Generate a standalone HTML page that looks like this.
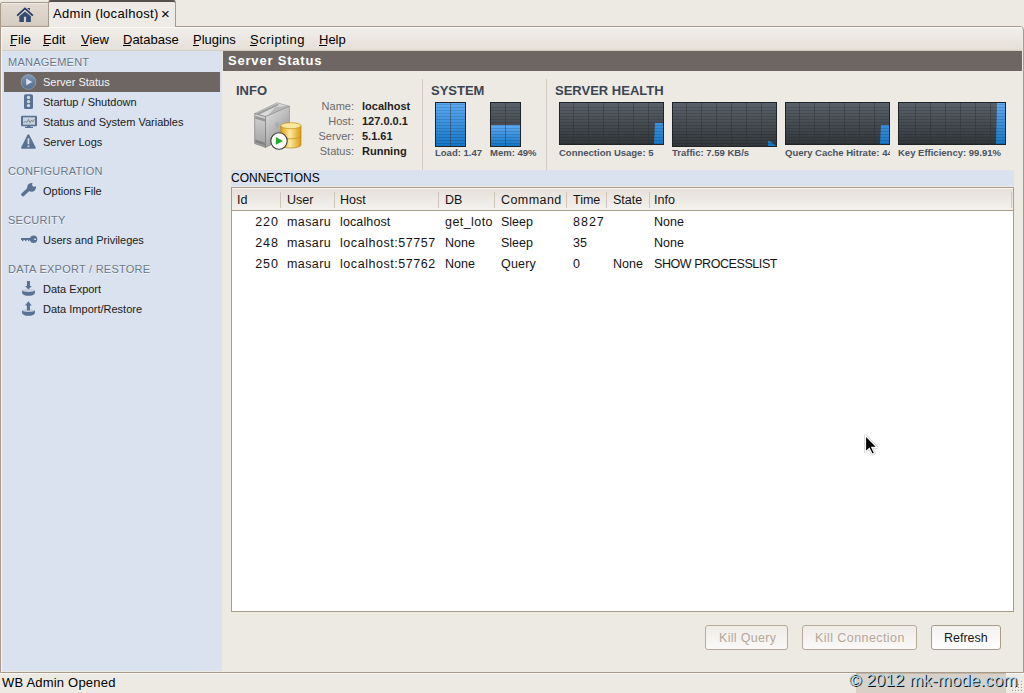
<!DOCTYPE html>
<html><head><meta charset="utf-8">
<style>
*{margin:0;padding:0;box-sizing:border-box}
html,body{width:1024px;height:693px;overflow:hidden}
body{background:#edeae4;font-family:"Liberation Sans",sans-serif;position:relative;color:#000}
.a{position:absolute;white-space:nowrap}
.t{position:absolute;white-space:nowrap;line-height:1}
.hd{font-size:11px;color:#6a7788;letter-spacing:0.25px;text-shadow:0 1px 0 #f4f7fb}
.it{font-size:11px;color:#1a1a1a}
.sh{font-size:13px;font-weight:bold;color:#3b4552}
.lb{font-size:11px;color:#6b6b6b}
.vl{font-size:11px;font-weight:bold;color:#1e1e1e}
.gl{font-size:9.5px;font-weight:bold;color:#4a5360}
.tc{font-size:12.5px;color:#141414}
.bt{font-size:12.5px}
</style></head><body>

<!-- frame -->
<div class="a" style="left:0;top:26px;width:1024px;height:647px;border:1px solid #a89a88;border-radius:0 4px 0 0"></div>
<div class="a" style="left:1px;top:27px;width:1px;height:645px;background:#f6f4f0"></div>
<div class="a" style="left:0;top:673px;width:1024px;height:1px;background:#f8f7f4"></div>

<!-- tab bar -->
<div class="a" style="left:0;top:2px;width:49px;height:25px;background:linear-gradient(#e2dbd2,#d5ccc1);border:1px solid #a89a88;border-radius:2px 2px 0 0;box-shadow:inset 0 1px 0 #efebe6"></div>
<div class="a" style="left:48px;top:0;width:128px;height:27px;background:#eeebe6;border:1px solid #a89a88;border-top:2px solid #55504c;border-bottom:none;border-radius:3px 3px 0 0"></div>
<div class="t" style="left:53px;top:7px;font-size:13px;letter-spacing:0.3px">Admin (localhost)</div>
<div class="t" style="left:161px;top:6px;font-size:15px">×</div>

<!-- menubar -->
<div class="a" style="left:2px;top:27px;width:1020px;height:24px;background:linear-gradient(#f1eeea,#e5dfd8);border-top:1px solid #faf9f6;border-bottom:1px solid #d6cdc2"></div>
<div class="t" style="left:10px;top:33px;font-size:13px">File</div>
<div class="t" style="left:43px;top:33px;font-size:13px">Edit</div>
<div class="t" style="left:81px;top:33px;font-size:13px">View</div>
<div class="t" style="left:123px;top:33px;font-size:13px">Database</div>
<div class="t" style="left:193px;top:33px;font-size:13px">Plugins</div>
<div class="t" style="left:250px;top:33px;font-size:13px;letter-spacing:0.5px">Scripting</div>
<div class="t" style="left:319px;top:33px;font-size:13px">Help</div>

<div class="a" style="left:10px;top:45px;width:6px;height:1px;background:#000"></div>
<div class="a" style="left:43px;top:45px;width:6px;height:1px;background:#000"></div>
<div class="a" style="left:81px;top:45px;width:7px;height:1px;background:#000"></div>
<div class="a" style="left:123px;top:45px;width:8px;height:1px;background:#000"></div>
<div class="a" style="left:193px;top:45px;width:6px;height:1px;background:#000"></div>
<div class="a" style="left:250px;top:45px;width:7px;height:1px;background:#000"></div>
<div class="a" style="left:319px;top:45px;width:8px;height:1px;background:#000"></div>
<!-- sidebar -->
<div class="a" style="left:2px;top:51px;width:220px;height:620px;background:#d9e2ee"></div>
<div class="a" style="left:4px;top:72px;width:216px;height:20px;background:#6e6663"></div>


<!-- sidebar items -->
<div class="t hd" style="left:8px;top:57px">MANAGEMENT</div>
<div class="t it" style="left:43px;top:77px;color:#f4f4f4">Server Status</div>
<div class="t it" style="left:43px;top:97px">Startup / Shutdown</div>
<div class="t it" style="left:43px;top:117px">Status and System Variables</div>
<div class="t it" style="left:43px;top:137px">Server Logs</div>
<div class="t hd" style="left:8px;top:166px">CONFIGURATION</div>
<div class="t it" style="left:43px;top:186px">Options File</div>
<div class="t hd" style="left:8px;top:215px">SECURITY</div>
<div class="t it" style="left:43px;top:235px">Users and Privileges</div>
<div class="t hd" style="left:8px;top:264px">DATA EXPORT / RESTORE</div>
<div class="t it" style="left:43px;top:284px">Data Export</div>
<div class="t it" style="left:43px;top:304px">Data Import/Restore</div>

<!-- header -->
<div class="a" style="left:223px;top:51px;width:799px;height:20px;background:#6e6663"></div>
<div class="t" style="left:228px;top:54px;font-size:13px;font-weight:bold;color:#fff;letter-spacing:0.8px">Server Status</div>


<!-- icons -->
<svg class="a" style="left:0;top:0" width="1024" height="330">
<defs>
<linearGradient id="icb" x1="0" y1="0" x2="0" y2="1"><stop offset="0" stop-color="#7e97b6"/><stop offset="1" stop-color="#536c8c"/></linearGradient>
<linearGradient id="towS" x1="0" y1="0" x2="0.6" y2="1"><stop offset="0" stop-color="#e4e4e4"/><stop offset="0.5" stop-color="#bdbdbd"/><stop offset="1" stop-color="#8e8e8e"/></linearGradient>
<linearGradient id="towF" x1="0" y1="0" x2="0" y2="1"><stop offset="0" stop-color="#d4d4d4"/><stop offset="1" stop-color="#a0a0a0"/></linearGradient>
<linearGradient id="gold" x1="0" y1="0" x2="1" y2="0"><stop offset="0" stop-color="#e0a010"/><stop offset="0.45" stop-color="#fde9a0"/><stop offset="1" stop-color="#d89a10"/></linearGradient>
</defs>
<!-- home -->
<g fill="#253b60">
<polyline points="17.2,15.6 25,8.4 32.8,15.6" fill="none" stroke="#253b60" stroke-width="1.8" stroke-linecap="butt"/>
<polygon points="27.2,8 29.8,8 29.8,10.4"/>
<polygon points="19.3,16.3 25,11.4 30.9,16.3 30.9,21.9 26.1,21.9 26.1,16.8 23.9,16.8 23.9,21.9 19.3,21.9" fill="#334b72"/>
</g>
<!-- server status circle -->
<circle cx="28.5" cy="82" r="7.4" fill="url(#icb)" stroke="#d6d2cf" stroke-width="0.6" stroke-opacity="0.6"/>
<polygon points="26.2,78.6 26.2,85.2 32.2,81.9" fill="#dbe2ec"/>
<!-- startup -->
<rect x="24" y="94.2" width="9" height="14.8" rx="1.6" fill="#5a7292"/>
<circle cx="28.5" cy="97.5" r="1.7" fill="#cfd8e2"/><circle cx="28.5" cy="101.6" r="1.7" fill="#cfd8e2"/><circle cx="28.5" cy="105.6" r="1.7" fill="#cfd8e2"/>
<!-- monitor -->
<rect x="21" y="115.8" width="16" height="10.4" rx="1" fill="#5a7292"/>
<rect x="23" y="117.3" width="12" height="7.4" fill="#c9d1da"/>
<polyline points="23.5,122.5 25.5,121.5 27,122.6 28.5,119.5 30,122.8 31.5,120 33,121.8 34.5,119" fill="none" stroke="#707b88" stroke-width="0.8"/>
<rect x="27.2" y="126" width="3" height="1" fill="#5a7292"/>
<rect x="25" y="126.8" width="8" height="1.2" fill="#5a7292"/>
<!-- warning -->
<path d="M28.4,134.3 Q29,134.3 29.5,135.2 L35.6,147.2 Q36,148.7 34.6,148.7 L22.2,148.7 Q20.8,148.7 21.2,147.2 L27.3,135.2 Q27.8,134.3 28.4,134.3 Z" fill="#5a7292"/>
<rect x="27.6" y="138.2" width="1.7" height="6" fill="#d4dbe4"/>
<rect x="27.6" y="145.5" width="1.7" height="1.6" fill="#d4dbe4"/>
<!-- wrench -->
<line x1="23" y1="194.5" x2="28.8" y2="189" stroke="#5a7292" stroke-width="3.6" stroke-linecap="round"/>
<circle cx="31.6" cy="187.3" r="4.4" fill="#5a7292"/>
<circle cx="34.2" cy="184.7" r="2.1" fill="#d9e2ee"/>
<polygon points="33.5,182 37.5,182 37.5,186 36.2,186" fill="#d9e2ee"/>
<!-- key -->
<circle cx="33.6" cy="239.3" r="3.7" fill="#5a7292"/>
<rect x="21" y="238" width="10" height="2" fill="#5a7292"/>
<rect x="22" y="239.5" width="1.4" height="1.6" fill="#5a7292"/><rect x="25" y="239.5" width="1.4" height="1.6" fill="#5a7292"/><rect x="28" y="239.5" width="1.4" height="1.6" fill="#5a7292"/>
<rect x="34" y="238.7" width="2" height="1.2" fill="#dfe5ee"/>
<!-- export -->
<ellipse cx="28.5" cy="292.8" rx="6.4" ry="3" fill="#5a7292"/>
<rect x="22.1" y="290.3" width="12.8" height="2.5" fill="#5a7292"/>
<ellipse cx="28.5" cy="290.3" rx="6.4" ry="1.6" fill="#c8d1dc"/>
<rect x="26.9" y="281" width="3.1" height="5.5" fill="#5a7292"/>
<polygon points="25,286 31.8,286 28.4,289.4" fill="#5a7292"/>
<!-- import -->
<ellipse cx="28.5" cy="312.8" rx="6.4" ry="3" fill="#5a7292"/>
<rect x="22.1" y="310.3" width="12.8" height="2.5" fill="#5a7292"/>
<ellipse cx="28.5" cy="310.3" rx="6.4" ry="1.6" fill="#c8d1dc"/>
<rect x="26.9" y="305" width="3.1" height="5.5" fill="#5a7292"/>
<polygon points="25,305.4 31.8,305.4 28.4,301.2" fill="#5a7292"/>
<!-- server tower -->
<polygon points="254.7,113.6 277.2,102.8 289.4,106.3 265.5,116.6" fill="#dcdcdc" stroke="#8a8a8a" stroke-width="0.6"/>
<polygon points="256.5,113.6 276.8,104 279.5,104.8 259.2,114.4" fill="#9c9c9c"/>
<polygon points="275.5,107 287.5,105.8 288.2,106.6 268,115.3" fill="#a8a8a8" opacity="0.7"/>
<polygon points="265.5,116.6 289.4,106.3 289.4,135.7 265.5,147.4" fill="url(#towS)" stroke="#808080" stroke-width="0.6"/>
<polygon points="254.7,113.6 265.5,116.6 265.5,147.4 254.7,143.5" fill="url(#towF)" stroke="#707070" stroke-width="0.6"/>
<polygon points="255.3,116 264.9,118.8 264.9,121.5 255.3,118.7" fill="#6a6a6a" opacity="0.55"/>
<polygon points="255.3,139.5 264.9,142.5 264.9,145.5 255.3,142.5" fill="#6a6a6a" opacity="0.6"/>
<ellipse cx="277" cy="125" rx="2.2" ry="2.8" fill="#a0a0a0" opacity="0.5"/>
<!-- database -->
<path d="M280.8,125.7 L280.8,145 A10.1,3 0 0 0 301,145 L301,125.7 Z" fill="url(#gold)" stroke="#b88812" stroke-width="0.7"/>
<path d="M280.8,135.8 A10.1,3 0 0 0 301,135.8" fill="none" stroke="#c89418" stroke-width="0.8"/>
<ellipse cx="290.9" cy="125.7" rx="10.1" ry="3" fill="#fbe7a0" stroke="#c0901a" stroke-width="0.7"/>
<!-- play -->
<circle cx="279" cy="141" r="8.2" fill="#fdfdfd" stroke="#3a3a3a" stroke-width="1.1"/>
<polygon points="275.9,137 275.9,144.8 282.9,140.9" fill="#22aa22"/>
</svg>
<!-- info section -->
<div class="t sh" style="left:236px;top:84px">INFO</div>
<div class="t sh" style="left:431px;top:84px">SYSTEM</div>
<div class="t sh" style="left:555px;top:84px">SERVER HEALTH</div>
<div class="a" style="left:422px;top:79px;width:1px;height:91px;background:#d2ccc3"></div>
<div class="a" style="left:546px;top:79px;width:1px;height:91px;background:#d2ccc3"></div>
<div class="t lb" style="right:670px;top:101px">Name:</div>
<div class="t lb" style="right:670px;top:116px">Host:</div>
<div class="t lb" style="right:670px;top:131px">Server:</div>
<div class="t lb" style="right:670px;top:146px">Status:</div>
<div class="t vl" style="left:362px;top:101px">localhost</div>
<div class="t vl" style="left:362px;top:116px">127.0.0.1</div>
<div class="t vl" style="left:362px;top:131px">5.1.61</div>
<div class="t vl" style="left:362px;top:146px">Running</div>
<div class="t gl" style="left:435px;top:148px">Load: 1.47</div>
<div class="t gl" style="left:490px;top:148px">Mem: 49%</div>
<div class="t gl" style="left:559px;top:148px">Connection Usage: 5</div>
<div class="t gl" style="left:672px;top:148px">Traffic: 7.59 KB/s</div>
<div class="a" style="left:785px;top:140px;width:105px;height:20px;overflow:hidden"><div class="t gl" style="left:0;top:8px">Query Cache Hitrate: 44%</div></div>
<div class="t gl" style="left:898px;top:148px">Key Efficiency: 99.91%</div>

<!-- graphs -->
<svg width="0" height="0" style="position:absolute"><defs>
<linearGradient id="gbg" x1="0" y1="0" x2="0" y2="1"><stop offset="0" stop-color="#59616a"/><stop offset="1" stop-color="#33373b"/></linearGradient>
<linearGradient id="gblue" x1="0" y1="0" x2="0" y2="1"><stop offset="0" stop-color="#5eaaf4"/><stop offset="1" stop-color="#1476c6"/></linearGradient>
<linearGradient id="gblueU" gradientUnits="userSpaceOnUse" x1="0" y1="1" x2="0" y2="43"><stop offset="0" stop-color="#5eaaf4"/><stop offset="1" stop-color="#1476c6"/></linearGradient>
<pattern id="stripes" x="0" y="0" width="8" height="3" patternUnits="userSpaceOnUse"><rect x="0" y="2" width="8" height="1" fill="#000" opacity="0.13"/></pattern>
</defs></svg><svg class="a" style="left:435px;top:102px" width="31" height="45" shape-rendering="crispEdges"><rect x="0" y="0" width="31" height="45" fill="#202427"/><rect x="1" y="1" width="29" height="43" fill="url(#gbg)"/><rect x="1" y="2" width="29" height="1" fill="#6a737a" opacity="0.6"/><polygon points="1,1 30,1 30,44 1,44" fill="url(#gblue)" shape-rendering="auto"/><rect x="1" y="1" width="29" height="43" fill="url(#stripes)"/><rect x="15" y="1" width="1" height="43" fill="#2c3034" opacity="0.45"/></svg><svg class="a" style="left:490px;top:102px" width="31" height="45" shape-rendering="crispEdges"><rect x="0" y="0" width="31" height="45" fill="#202427"/><rect x="1" y="1" width="29" height="43" fill="url(#gbg)"/><rect x="1" y="2" width="29" height="1" fill="#6a737a" opacity="0.6"/><polygon points="1,23 30,23 30,44 1,44" fill="url(#gblue)" shape-rendering="auto"/><rect x="1" y="1" width="29" height="43" fill="url(#stripes)"/><rect x="15" y="1" width="1" height="43" fill="#2c3034" opacity="0.45"/></svg><svg class="a" style="left:559px;top:102px" width="105" height="43" shape-rendering="crispEdges"><rect x="0" y="0" width="105" height="43" fill="#202427"/><rect x="1" y="1" width="103" height="41" fill="url(#gbg)"/><rect x="1" y="2" width="103" height="1" fill="#6a737a" opacity="0.6"/><polygon points="96,21 104,21 104,42 95,42" fill="url(#gblueU)" shape-rendering="auto"/><rect x="1" y="1" width="103" height="41" fill="url(#stripes)"/><rect x="89" y="1" width="1" height="41" fill="#2c3034" opacity="0.45"/><rect x="74" y="1" width="1" height="41" fill="#2c3034" opacity="0.45"/><rect x="59" y="1" width="1" height="41" fill="#2c3034" opacity="0.45"/><rect x="44" y="1" width="1" height="41" fill="#2c3034" opacity="0.45"/><rect x="29" y="1" width="1" height="41" fill="#2c3034" opacity="0.45"/><rect x="14" y="1" width="1" height="41" fill="#2c3034" opacity="0.45"/></svg><svg class="a" style="left:672px;top:102px" width="105" height="45" shape-rendering="crispEdges"><rect x="0" y="0" width="105" height="45" fill="#202427"/><rect x="1" y="1" width="103" height="43" fill="url(#gbg)"/><rect x="1" y="2" width="103" height="1" fill="#6a737a" opacity="0.6"/><polygon points="96,39 98,39 104,44 96,44" fill="url(#gblueU)" shape-rendering="auto"/><rect x="1" y="1" width="103" height="43" fill="url(#stripes)"/><rect x="89" y="1" width="1" height="43" fill="#2c3034" opacity="0.45"/><rect x="74" y="1" width="1" height="43" fill="#2c3034" opacity="0.45"/><rect x="59" y="1" width="1" height="43" fill="#2c3034" opacity="0.45"/><rect x="44" y="1" width="1" height="43" fill="#2c3034" opacity="0.45"/><rect x="29" y="1" width="1" height="43" fill="#2c3034" opacity="0.45"/><rect x="14" y="1" width="1" height="43" fill="#2c3034" opacity="0.45"/></svg><svg class="a" style="left:785px;top:102px" width="105" height="43" shape-rendering="crispEdges"><rect x="0" y="0" width="105" height="43" fill="#202427"/><rect x="1" y="1" width="103" height="41" fill="url(#gbg)"/><rect x="1" y="2" width="103" height="1" fill="#6a737a" opacity="0.6"/><polygon points="96,23 104,23 104,42 95,42" fill="url(#gblueU)" shape-rendering="auto"/><rect x="1" y="1" width="103" height="41" fill="url(#stripes)"/><rect x="89" y="1" width="1" height="41" fill="#2c3034" opacity="0.45"/><rect x="74" y="1" width="1" height="41" fill="#2c3034" opacity="0.45"/><rect x="59" y="1" width="1" height="41" fill="#2c3034" opacity="0.45"/><rect x="44" y="1" width="1" height="41" fill="#2c3034" opacity="0.45"/><rect x="29" y="1" width="1" height="41" fill="#2c3034" opacity="0.45"/><rect x="14" y="1" width="1" height="41" fill="#2c3034" opacity="0.45"/></svg><svg class="a" style="left:898px;top:102px" width="108" height="43" shape-rendering="crispEdges"><rect x="0" y="0" width="108" height="43" fill="#202427"/><rect x="1" y="1" width="106" height="41" fill="url(#gbg)"/><rect x="1" y="2" width="106" height="1" fill="#6a737a" opacity="0.6"/><polygon points="99,1 107,1 107,42 98,42" fill="url(#gblueU)" shape-rendering="auto"/><rect x="1" y="1" width="106" height="41" fill="url(#stripes)"/><rect x="92" y="1" width="1" height="41" fill="#2c3034" opacity="0.45"/><rect x="77" y="1" width="1" height="41" fill="#2c3034" opacity="0.45"/><rect x="62" y="1" width="1" height="41" fill="#2c3034" opacity="0.45"/><rect x="47" y="1" width="1" height="41" fill="#2c3034" opacity="0.45"/><rect x="32" y="1" width="1" height="41" fill="#2c3034" opacity="0.45"/><rect x="17" y="1" width="1" height="41" fill="#2c3034" opacity="0.45"/></svg>
<!-- connections -->
<div class="a" style="left:231px;top:170px;width:783px;height:16px;background:#d9e2ee"></div>
<div class="t" style="left:231px;top:172px;font-size:12px">CONNECTIONS</div>
<div class="a" style="left:231px;top:187px;width:783px;height:425px;background:#fff;border:1px solid #a89c8a"></div>


<!-- table header -->
<div class="a" style="left:232px;top:188px;width:781px;height:23px;background:linear-gradient(#e6e0d9,#f4f2ee);border-top:1px solid #faf8f5;border-bottom:1px solid #a89c8a"></div>
<div class="a" style="left:280px;top:192px;width:1px;height:16px;background:#cfc7bc"></div>
<div class="a" style="left:334px;top:192px;width:1px;height:16px;background:#cfc7bc"></div>
<div class="a" style="left:438px;top:192px;width:1px;height:16px;background:#cfc7bc"></div>
<div class="a" style="left:494px;top:192px;width:1px;height:16px;background:#cfc7bc"></div>
<div class="a" style="left:566px;top:192px;width:1px;height:16px;background:#cfc7bc"></div>
<div class="a" style="left:606px;top:192px;width:1px;height:16px;background:#cfc7bc"></div>
<div class="a" style="left:649px;top:192px;width:1px;height:16px;background:#cfc7bc"></div>
<div class="a" style="left:1011px;top:192px;width:1px;height:16px;background:#cfc7bc"></div>
<div class="t tc" style="left:237px;top:194px">Id</div>
<div class="t tc" style="left:287px;top:194px">User</div>
<div class="t tc" style="left:340px;top:194px">Host</div>
<div class="t tc" style="left:445px;top:194px">DB</div>
<div class="t tc" style="left:501px;top:194px;letter-spacing:0.43px">Command</div>
<div class="t tc" style="left:573px;top:194px">Time</div>
<div class="t tc" style="left:613px;top:194px">State</div>
<div class="t tc" style="left:654px;top:194px">Info</div>
<div class="t tc" style="right:745px;top:216px;letter-spacing:1px">220</div>
<div class="t tc" style="left:287px;top:216px;letter-spacing:0.4px">masaru</div>
<div class="t tc" style="left:340px;top:216px;letter-spacing:0.12px">localhost</div>
<div class="t tc" style="left:445px;top:216px;letter-spacing:0.43px">get_loto</div>
<div class="t tc" style="left:501px;top:216px">Sleep</div>
<div class="t tc" style="left:573px;top:216px;letter-spacing:1px">8827</div>
<div class="t tc" style="left:654px;top:216px">None</div>
<div class="t tc" style="right:745px;top:237px;letter-spacing:1px">248</div>
<div class="t tc" style="left:287px;top:237px;letter-spacing:0.4px">masaru</div>
<div class="t tc" style="left:340px;top:237px;letter-spacing:0.55px">localhost:57757</div>
<div class="t tc" style="left:445px;top:237px">None</div>
<div class="t tc" style="left:501px;top:237px">Sleep</div>
<div class="t tc" style="left:573px;top:237px">35</div>
<div class="t tc" style="left:654px;top:237px">None</div>
<div class="t tc" style="right:745px;top:258px;letter-spacing:1px">250</div>
<div class="t tc" style="left:287px;top:258px;letter-spacing:0.4px">masaru</div>
<div class="t tc" style="left:340px;top:258px;letter-spacing:0.55px">localhost:57762</div>
<div class="t tc" style="left:445px;top:258px">None</div>
<div class="t tc" style="left:501px;top:258px;letter-spacing:0.2px">Query</div>
<div class="t tc" style="left:573px;top:258px">0</div>
<div class="t tc" style="left:613px;top:258px">None</div>
<div class="t tc" style="left:654px;top:258px;letter-spacing:-0.43px">SHOW PROCESSLIST</div>

<!-- buttons -->
<div class="a" style="left:705px;top:625px;width:83px;height:25px;border:1px solid #b5aa99;border-radius:3px;background:linear-gradient(#efebe7,#faf9f7)"></div>
<div class="a" style="left:802px;top:625px;width:115px;height:25px;border:1px solid #b5aa99;border-radius:3px;background:linear-gradient(#efebe7,#faf9f7)"></div>
<div class="a" style="left:931px;top:625px;width:70px;height:25px;border:1px solid #a89c8a;border-radius:3px;background:linear-gradient(#f4f2ef,#fff)"></div>

<div class="t bt" style="left:719px;top:632px;color:#b3a898;letter-spacing:0.3px">Kill Query</div>
<div class="t bt" style="left:815px;top:632px;color:#b3a898;letter-spacing:0.43px">Kill Connection</div>
<div class="t bt" style="left:944px;top:632px;color:#1a1a1a">Refresh</div>
<!-- status bar -->
<div class="t" style="left:2px;top:676px;font-size:13px;letter-spacing:0.2px">WB Admin Opened</div>

<!-- watermark -->
<div class="a" style="left:856px;top:673px;width:150px;height:20px;background:#d9d1c7;border-top:1px solid #c2b8aa"></div>
<div class="t" style="left:849px;top:672px;font-size:17px;letter-spacing:0.05px;color:#a9d6ea;text-shadow:1px 1px 0 #111">© 2012 mk-mode.com</div>
<!-- grip -->
<svg class="a" style="left:1004px;top:673px" width="20" height="20" shape-rendering="crispEdges">
<g fill="#fbfaf8"><rect x="18" y="9" width="1" height="1"/><rect x="15" y="12" width="1" height="1"/><rect x="18" y="12" width="1" height="1"/><rect x="12" y="15" width="1" height="1"/><rect x="15" y="15" width="1" height="1"/><rect x="18" y="15" width="1" height="1"/><rect x="9" y="18" width="1" height="1"/><rect x="12" y="18" width="1" height="1"/><rect x="15" y="18" width="1" height="1"/><rect x="18" y="18" width="1" height="1"/></g>
<g fill="#a89a88"><rect x="17" y="8" width="1" height="1"/><rect x="14" y="11" width="1" height="1"/><rect x="17" y="11" width="1" height="1"/><rect x="11" y="14" width="1" height="1"/><rect x="14" y="14" width="1" height="1"/><rect x="17" y="14" width="1" height="1"/><rect x="8" y="17" width="1" height="1"/><rect x="11" y="17" width="1" height="1"/><rect x="14" y="17" width="1" height="1"/><rect x="17" y="17" width="1" height="1"/></g>
</svg>
<!-- cursor -->
<svg class="a" style="left:863px;top:432.5px" width="20" height="26">
<path d="M2.5,2.5 L2.5,19 L6.3,15.4 L9.2,21.3 L11.6,20.2 L8.8,14.3 L14,14.3 Z" fill="none" stroke="#c4c4c4" stroke-width="2.4" stroke-linejoin="round"/><path d="M2.5,2.5 L2.5,19 L6.3,15.4 L9.2,21.3 L11.6,20.2 L8.8,14.3 L14,14.3 Z" fill="#000" stroke="#fff" stroke-width="1.2" stroke-linejoin="miter"/>
</svg>
</body></html>
